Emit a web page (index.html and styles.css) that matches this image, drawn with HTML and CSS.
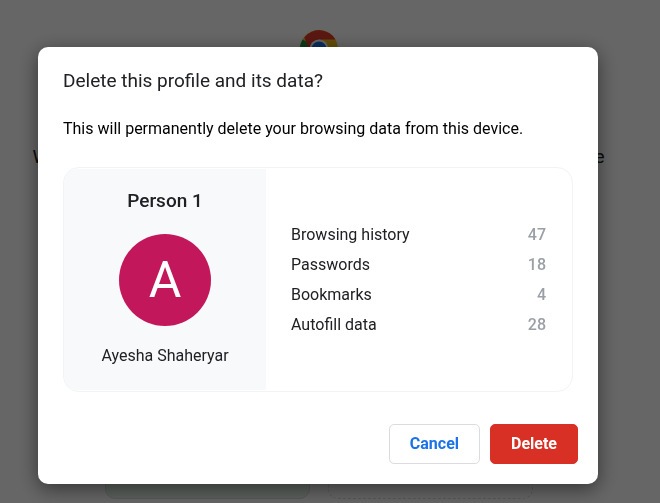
FILE: index.html
```html
<!DOCTYPE html>
<html lang="en">
<head>
<meta charset="utf-8">
<title>Delete profile</title>
<link rel="stylesheet" href="styles.css">
</head>
<body>
<main class="picker" inert>
  <svg class="logo" viewBox="0 0 48 48" aria-hidden="true">
    <circle cx="24" cy="24" r="24" fill="#fbc116"/>
    <path d="M24 24 3.200 12A24 24 0 0 0 24 48l10.400-18z" fill="#229342"/>
    <path d="M5.500 9A24 24 0 0 1 44.800 12H24v12L13.600 30z" fill="#e33b2e"/>
    <circle cx="24" cy="24" r="12" fill="#fff"/>
    <circle cx="24" cy="24" r="9.500" fill="#1a73e8"/>
  </svg>
  <p class="intro">With Chrome profiles you can separate all your Chrome stuff. Create</p>
  <div class="profiles">
    <div class="profile"></div>
    <div class="profile profile-add"></div>
  </div>
</main>
<div class="overlay">
  <section class="dialog" role="dialog" aria-modal="true" aria-labelledby="title">
    <h1 class="title" id="title">Delete this profile and its data?</h1>
    <p class="warning">This will permanently delete your browsing data from this device.</p>
    <div class="card">
      <div class="person">
        <h2 class="person-name">Person 1</h2>
        <div class="avatar">A</div>
        <div class="account">Ayesha Shaheryar</div>
      </div>
      <div class="stats">
        <table class="stats-table">
          <tr><th scope="row">Browsing history</th><td>47</td></tr>
          <tr><th scope="row">Passwords</th><td>18</td></tr>
          <tr><th scope="row">Bookmarks</th><td>4</td></tr>
          <tr><th scope="row">Autofill data</th><td>28</td></tr>
        </table>
      </div>
    </div>
    <div class="actions">
      <button class="button cancel" type="button">Cancel</button>
      <button class="button delete" type="button">Delete</button>
    </div>
  </section>
</div>
</body>
</html>
```
FILE: styles.css
```css
* {
  box-sizing: border-box;
}

body {
  margin: 0;
  background: #fff;
  color: #202124;
  font: 16px/20px Roboto, sans-serif;
}

h1, h2, p {
  margin: 0;
}

.picker {
  display: flex;
  flex-direction: column;
  align-items: center;
  height: 100vh;
  padding: 30px 23px 0 0;
  overflow: hidden;
}

.logo {
  width: 38px;
  height: 38px;
  flex: none;
}

.intro {
  margin-top: 77px;
  font-size: 19px;
  line-height: 24px;
  white-space: nowrap;
}

.profiles {
  display: flex;
  gap: 18px;
  margin-top: 89px;
}

.profile {
  width: 205px;
  height: 241px;
  border: 1px solid #dadce0;
  border-radius: 10px;
  background: #e6f4ea;
}

.profile-add {
  border-style: dashed;
  background: none;
}

.overlay {
  position: fixed;
  inset: 0;
  display: flex;
  justify-content: center;
  align-items: flex-start;
  padding: 47px 24px 0 0;
  background: rgba(0, 0, 0, 0.6);
}

.dialog {
  width: 100%;
  max-width: 560px;
  padding: 20px 20px 20px 25px;
  border-radius: 10px;
  background: #fff;
  box-shadow: 0 5px 20px rgba(0, 0, 0, 0.5);
}

.title {
  font-size: 19px;
  font-weight: 400;
  line-height: 28px;
}

.warning {
  margin-top: 24px;
  color: #000;
}

.card {
  display: flex;
  height: 225px;
  margin: 28px 5px 0 0;
  padding: 1px 0;
  border: 1px solid #f1f3f4;
  border-radius: 16px;
  overflow: hidden;
}

.person {
  display: flex;
  flex: 0 0 202px;
  flex-direction: column;
  align-items: center;
  padding-top: 20px;
  border-radius: 14px 0 0 14px;
  background: #f8f9fb;
}

.person-name {
  font-size: 19px;
  font-weight: 500;
  line-height: 24px;
}

.avatar {
  display: grid;
  place-items: center;
  width: 92px;
  height: 92px;
  margin: 21px 0 20px;
  border-radius: 50%;
  background: #c2185b;
  color: #fff;
  font-size: 50px;
}

.stats {
  display: flex;
  flex: 1;
  align-items: center;
  padding: 0 26px 0 25px;
}

.stats-table {
  width: 100%;
  border-collapse: collapse;
  line-height: 30px;
}

.stats-table th,
.stats-table td {
  padding: 0;
  font-weight: 400;
  text-align: left;
}

.stats-table td {
  color: #9aa0a6;
  font-weight: 500;
  text-align: right;
}

.actions {
  display: flex;
  justify-content: flex-end;
  gap: 10px;
  margin-top: 32px;
}

.button {
  height: 40px;
  padding: 0 20px;
  border: 1px solid #dadce0;
  border-radius: 5px;
  background: #fff;
  color: #1a73e8;
  font: 700 16px/20px Roboto, sans-serif;
}

.delete {
  border-color: #d93025;
  background: #d93025;
  color: #fff;
}
```
